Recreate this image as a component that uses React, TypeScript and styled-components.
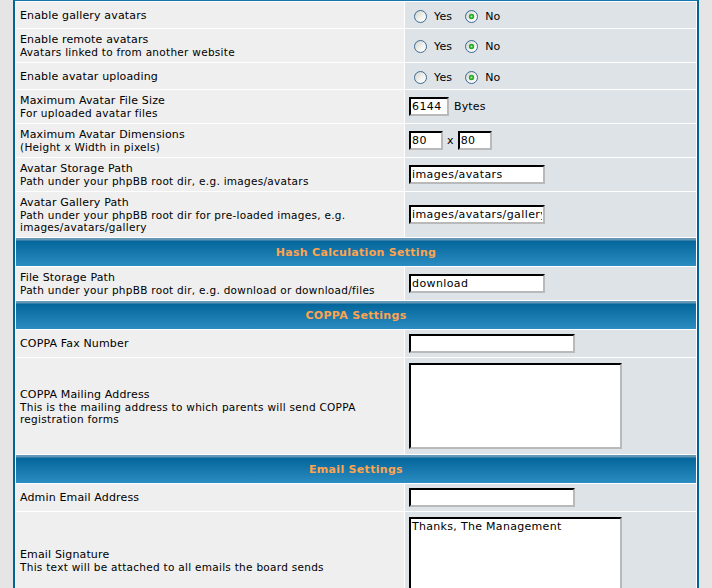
import React from 'react';
import styled, {createGlobalStyle} from 'styled-components';

const GlobalStyle = createGlobalStyle`
  html, body {
    margin: 0;
    padding: 0;
    overflow: hidden;
    background: #e5e5e5;
  }
  body {
    font-family: "DejaVu Sans", Verdana, sans-serif;
    color: #000;
  }
`;

const Page = styled.div`
  height: 100vh;
  overflow: hidden;
`;

const ForumLine = styled.div`
  box-sizing: content-box;
  margin-left: 13px;
  width: 680px;
  display: grid;
  grid-template-columns: 388px 291px;
  gap: 1px;
  padding: 1px;
  background: #ffffff;
  border: 2px solid #006699;
  border-top: 1px solid #1576ad;
`;

const SectionHeader = styled.div`
  grid-column: 1 / -1;
  height: 28px;
  display: flex;
  align-items: center;
  justify-content: center;
  background: linear-gradient(to bottom, #6497b5 0, #6497b5 2px, #04669a 3px, #2b8cc1 100%);
  color: #ffa34f;
  font-size: 11px;
  font-weight: bold;
  letter-spacing: 0.3px;
`;

const LabelCell = styled.div`
  background: #efefef;
  padding: 4px;
  display: flex;
  flex-direction: column;
  justify-content: center;
`;

const FieldCell = styled.div<{$roomy?: boolean}>`
  background: #dee3e7;
  padding: ${p => (p.$roomy ? '5px 4px' : '4px')};
  display: flex;
  align-items: center;
  font-size: 11px;
  letter-spacing: 0.15px;
`;

const Title = styled.span`
  font-size: 11px;
  line-height: 13px;
  letter-spacing: 0.15px;
`;

const Hint = styled.span`
  font-size: 10.5px;
  line-height: 12px;
  letter-spacing: 0.28px;
`;

const RadioGroup = styled.div`
  display: flex;
  align-items: center;
  height: 18px;
  padding-top: 2px;
  box-sizing: border-box;
`;

const Option = styled.label`
  display: flex;
  align-items: center;
  margin-right: 8px;
`;

const Radio = styled.input.attrs({type: 'radio'})`
  appearance: none;
  box-sizing: border-box;
  width: 13px;
  height: 13px;
  margin: 0 7px 0 5px;
  border: 1px solid #3d6a93;
  border-radius: 50%;
  background: linear-gradient(135deg, #d2d2cc 0%, #f4f4f2 60%, #ffffff 100%);

  &:checked {
    background:
      radial-gradient(circle at 50% 50%, #a8f0a8 0, #3bb83b 1.4px, #21a121 2.5px, transparent 3.1px),
      linear-gradient(135deg, #d2d2cc 0%, #f4f4f2 60%, #ffffff 100%);
  }
`;

const TextBox = styled.input.attrs({type: 'text'})<{$w: number}>`
  box-sizing: border-box;
  width: ${p => p.$w}px;
  height: 19px;
  margin: 0;
  padding: 0 1px;
  border-style: solid;
  border-width: 2px;
  border-color: #000 #b9b9b9 #b9b9b9 #000;
  background: #fff;
  font-family: "DejaVu Sans", Verdana, sans-serif;
  font-size: 11px;
  letter-spacing: 0.4px;
  color: #000;
  outline: none;
`;

const TextArea = styled.textarea`
  box-sizing: border-box;
  width: 213px;
  height: 86px;
  margin: 0;
  padding: 1px;
  border-style: solid;
  border-width: 2px;
  border-color: #000 #b9b9b9 #b9b9b9 #000;
  background: #fff;
  font-family: "DejaVu Sans", Verdana, sans-serif;
  font-size: 11px;
  letter-spacing: 0.3px;
  color: #000;
  resize: none;
  overflow: hidden;
  outline: none;
`;

const Unit = styled.span<{$gap: number}>`
  margin: 0 ${p => p.$gap}px;
`;

type RowProps = {title: string; hint?: string; roomy?: boolean; children: React.ReactNode};

const Row = ({title, hint, roomy, children}: RowProps) => (
  <>
    <LabelCell>
      <Title>{title}</Title>
      {hint && <Hint>{hint}</Hint>}
    </LabelCell>
    <FieldCell $roomy={roomy}>{children}</FieldCell>
  </>
);

const YesNo = ({name}: {name: string}) => (
  <RadioGroup>
    <Option>
      <Radio name={name}/>
      Yes
    </Option>
    <Option>
      <Radio name={name} defaultChecked/>
      No
    </Option>
  </RadioGroup>
);

export default function App() {
  return (
    <Page>
      <GlobalStyle/>
      <ForumLine>
        <Row title="Enable gallery avatars">
          <YesNo name="allow_avatar_local"/>
        </Row>
        <Row title="Enable remote avatars" hint="Avatars linked to from another website">
          <YesNo name="allow_avatar_remote"/>
        </Row>
        <Row title="Enable avatar uploading">
          <YesNo name="allow_avatar_upload"/>
        </Row>
        <Row title="Maximum Avatar File Size" hint="For uploaded avatar files">
          <TextBox $w={40} defaultValue="6144"/>
          <Unit $gap={5}>Bytes</Unit>
        </Row>
        <Row title="Maximum Avatar Dimensions" hint="(Height x Width in pixels)">
          <TextBox $w={34} defaultValue="80"/>
          <Unit $gap={4}>x</Unit>
          <TextBox $w={34} defaultValue="80"/>
        </Row>
        <Row title="Avatar Storage Path" hint="Path under your phpBB root dir, e.g. images/avatars">
          <TextBox $w={136} defaultValue="images/avatars"/>
        </Row>
        <Row
          title="Avatar Gallery Path"
          hint="Path under your phpBB root dir for pre-loaded images, e.g. images/avatars/gallery"
        >
          <TextBox $w={136} defaultValue="images/avatars/gallery"/>
        </Row>

        <SectionHeader>Hash Calculation Setting</SectionHeader>
        <Row title="File Storage Path" hint="Path under your phpBB root dir, e.g. download or download/files">
          <TextBox $w={136} defaultValue="download"/>
        </Row>

        <SectionHeader>COPPA Settings</SectionHeader>
        <Row title="COPPA Fax Number">
          <TextBox $w={166} defaultValue=""/>
        </Row>
        <Row
          title="COPPA Mailing Address"
          hint="This is the mailing address to which parents will send COPPA registration forms"
          roomy
        >
          <TextArea defaultValue=""/>
        </Row>

        <SectionHeader>Email Settings</SectionHeader>
        <Row title="Admin Email Address">
          <TextBox $w={166} defaultValue=""/>
        </Row>
        <Row title="Email Signature" hint="This text will be attached to all emails the board sends" roomy>
          <TextArea defaultValue="Thanks, The Management"/>
        </Row>
      </ForumLine>
    </Page>
  );
}
